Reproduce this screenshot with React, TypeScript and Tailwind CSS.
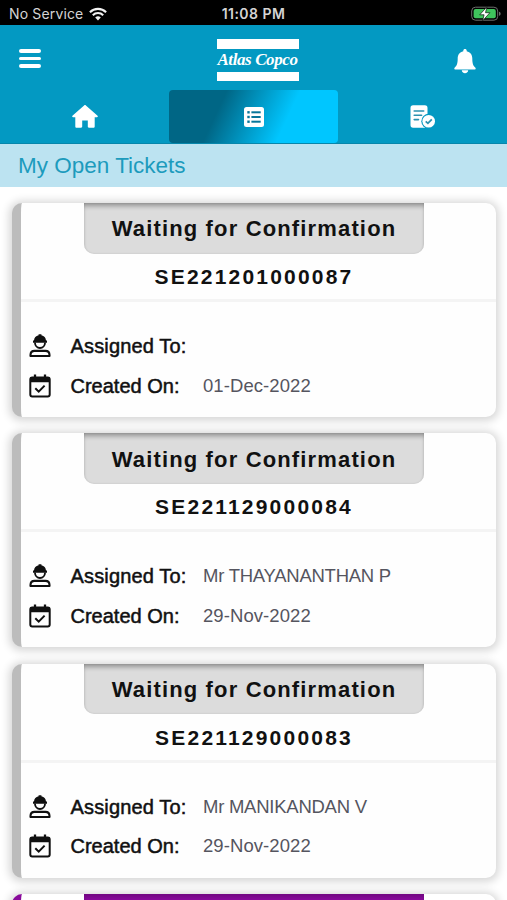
interface Ticket {
  id: string
  status: string
  assignedTo: string
  createdOn: string
}

const tickets: Ticket[] = [
  { id: "SE221201000087", status: "Waiting for Confirmation", assignedTo: "", createdOn: "01-Dec-2022" },
  { id: "SE221129000084", status: "Waiting for Confirmation", assignedTo: "Mr THAYANANTHAN P", createdOn: "29-Nov-2022" },
  { id: "SE221129000083", status: "Waiting for Confirmation", assignedTo: "Mr MANIKANDAN V", createdOn: "29-Nov-2022" },
]

function WifiIcon() {
  return (
    <svg width="18" height="14" viewBox="0 0 18 14" fill="none" stroke="#f2f2f2" strokeWidth="2.1">
      <path d="M0.9 5.2a11.6 11.6 0 0 1 16.2 0" />
      <path d="M3.8 8.2a7.4 7.4 0 0 1 10.4 0" />
      <path d="M6.2 10.5a4 4 0 0 1 5.6 0L9 13.6z" fill="#f2f2f2" stroke="none" />
    </svg>
  )
}

function BatteryIcon() {
  return (
    <svg width="30" height="16" viewBox="0 0 30 16">
      <rect x="0.7" y="1.2" width="26" height="13" rx="3.8" fill="none" stroke="#6d706d" strokeWidth="1" />
      <rect x="2.6" y="3.1" width="22.2" height="9.2" rx="2" fill="#3fc45c" />
      <path d="M28 5.8c1.2.4 1.6 1.1 1.6 2s-.4 1.6-1.6 2z" fill="#6d706d" />
      <path d="M16 0.8L8.7 8.8h4.4l-1.5 6 7.3-8.1h-4.4z" fill="#fff" stroke="#0a140c" strokeWidth="0.7" />
    </svg>
  )
}

function BellIcon() {
  return (
    <svg width="22" height="25" viewBox="0 0 22 25" fill="#fff">
      <path d="M11 0c-1 0-1.7.7-1.7 1.6v.6C5.6 3 3.7 5.9 3.7 9.5c0 5-.9 7.2-2.9 9-.9.8-.5 2 .6 2h19.2c1.1 0 1.5-1.2.6-2-2-1.8-2.9-4-2.9-9 0-3.6-1.9-6.5-5.600-7.300v-.6C12.7.7 12 0 11 0z" />
      <path d="M7.8 21.3h6.4c0 1.7-1.4 2.9-3.2 2.9s-3.200-1.200-3.200-2.900z" />
    </svg>
  )
}

function HomeIcon() {
  return (
    <svg width="26" height="23" viewBox="0 0 26 23" fill="#fff">
      <path d="M12.100.4c.5-.5 1.300-.5 1.800 0l11.400 10c.9.8.6 1.900-.5 1.900h-2.100v9.100c0 .8-.5 1.300-1.300 1.300h-4.500c-.7 0-1.100-.4-1.100-1.100v-6.100H10.200v6.100c0 .7-.4 1.100-1.100 1.100H4.600c-.8 0-1.300-.5-1.300-1.300v-9.100H1.200c-1.100 0-1.400-1.100-.5-1.900z" />
    </svg>
  )
}

function ListIcon() {
  return (
    <svg width="20" height="20" viewBox="0 0 20 20">
      <rect width="20" height="20" rx="2.5" fill="#fff" />
      <g fill="#08769a">
        <rect x="3.3" y="4.1" width="2.4" height="2.4" />
        <rect x="3.3" y="8.8" width="2.4" height="2.4" />
        <rect x="3.3" y="13.5" width="2.4" height="2.4" />
        <rect x="7.4" y="4.3" width="9.3" height="2" />
        <rect x="7.4" y="9" width="9.3" height="2" />
        <rect x="7.4" y="13.7" width="9.3" height="2" />
      </g>
    </svg>
  )
}

function ReportIcon() {
  return (
    <svg width="26" height="24" viewBox="0 0 26 24">
      <rect x="0.5" y="0.3" width="17" height="22.4" rx="2.6" fill="#fff" />
      <g stroke="#2b91b0" strokeWidth="1.6" strokeLinecap="round">
        <path d="M4.2 6h9.500M4.200 10.300h7.400M4.200 14.600h4.300" />
      </g>
      <circle cx="18.7" cy="16.2" r="7.4" fill="#0399c2" />
      <circle cx="18.7" cy="16.2" r="6.3" fill="#fff" />
      <path d="M15.7 16.3l2.200 2 3.900-4" fill="none" stroke="#2b91b0" strokeWidth="1.8" />
    </svg>
  )
}

function WorkerIcon() {
  return (
    <svg width="22" height="24" viewBox="0 0 22 24" fill="#101010">
      <path d="M9.600.2h2.800v1.100c2.800.6 4.400 2.600 4.600 5.100h1v2.300H4V6.400h1c.2-2.500 1.800-4.500 4.600-5.100z" />
      <path d="M5.900 8.500c.2 3.100 2.300 5.500 5.100 5.500s4.900-2.400 5.100-5.500" fill="none" stroke="#101010" strokeWidth="1.9" />
      <path d="M1.500 22v-1c0-2.600 1.600-4.100 4.100-4.100h10.800c2.500 0 4.100 1.500 4.100 4.100v1z" fill="none" stroke="#101010" strokeWidth="2.1" strokeLinejoin="round" />
    </svg>
  )
}

function CalendarIcon() {
  return (
    <svg width="22" height="24" viewBox="0 0 22 24" fill="none" stroke="#101010">
      <rect x="1.3" y="3.6" width="19.4" height="18.9" rx="2" strokeWidth="2" />
      <path d="M1 3.500h20v4.700H1z" fill="#101010" stroke="none" />
      <path d="M6 .4v4M16 .4v4" strokeWidth="2.3" />
      <path d="M6.300 14.300l3.400 3.300 5.900-6" strokeWidth="2" />
    </svg>
  )
}

function TicketCard({ ticket }: { ticket: Ticket }) {
  return (
    <div className="h-[214px] shrink-0 overflow-hidden rounded-[10px] border-l-[9px] border-[#bcbcbc] bg-[#fefefe] shadow-[0_1px_9px_3px_rgba(0,0,0,0.16)]">

      <div className="flex h-[99px] flex-col items-center border-b-[3px] border-[#f4f4f4] pr-[9px]">
        <div className="flex h-[50.500px] w-[340px] justify-center rounded-b-[10px] bg-[#dcdcdc] pt-[9.300px] shadow-[inset_0_5px_5px_-2px_rgba(0,0,0,0.33),inset_0_0_2px_rgba(0,0,0,0.15)]">
          <span className="text-[22px] leading-[34px] font-bold tracking-[1.150px] whitespace-nowrap">{ticket.status}</span>
        </div>
        <span className="mt-[8.500px] text-[21px] leading-[30px] font-bold tracking-[2.200px]">{ticket.id}</span>
      </div>

      <div className="flex flex-col gap-[9.500px] pt-[29.200px] pl-2 text-[20px] leading-[30px]">
        <div className="flex items-center">
          <WorkerIcon />
          <span className="ml-[19.500px] w-[132.500px] whitespace-nowrap tracking-[0.150px] [-webkit-text-stroke:0.5px_#111]">Assigned To:</span>
          <span className="text-[18.500px] tracking-[-0.250px] text-[#55555f]">{ticket.assignedTo}</span>
        </div>
        <div className="flex items-center">
          <CalendarIcon />
          <span className="ml-[19.500px] w-[132.500px] whitespace-nowrap [-webkit-text-stroke:0.5px_#111]">Created On:</span>
          <span className="text-[18.500px] tracking-[0.080px] text-[#55555f]">{ticket.createdOn}</span>
        </div>
      </div>

    </div>
  )
}

function App() {
  return (
    <div className="flex h-[900px] w-[507px] flex-col overflow-hidden bg-white font-['Liberation_Sans',sans-serif] text-[#111]">

      {/* STATUS BAR */}
      <div className="grid h-[25px] shrink-0 grid-cols-3 items-center bg-black pt-[3px] text-[#d4d4d4]">
        <div className="flex items-center gap-1.5 pl-[9px]">
          <span className="font-[Inter,sans-serif] text-[14px] leading-5 tracking-[0.150px]">No Service</span>
          <WifiIcon />
        </div>
        <span className="text-center font-[Inter,sans-serif] text-[14px] leading-5 font-semibold tracking-[0.450px]">11:08 PM</span>
        <div className="flex justify-end pr-[6px]">
          <BatteryIcon />
        </div>
      </div>

      {/* HEADER */}
      <header className="h-[119px] shrink-0 border-b border-[#0786ab] bg-[#0399c2]">
        <div className="flex h-[65px] justify-between pr-[31px] pl-[19px]">
          <div className="flex w-[22px] flex-col gap-1 pt-6">
            <span className="h-[3.500px] rounded-sm bg-white" />
            <span className="h-[3.500px] rounded-sm bg-white" />
            <span className="h-[3.500px] rounded-sm bg-white" />
          </div>
          <div className="mt-[14px] ml-5 flex h-[42px] w-[82px] flex-col justify-between">
            <span className="h-[9.500px] bg-white" />
            <span className="text-center font-['Liberation_Serif',serif] text-[17px] leading-[20px] font-bold tracking-[-0.400px] whitespace-nowrap text-white italic">Atlas Copco</span>
            <span className="h-[9.500px] bg-white" />
          </div>
          <div className="pt-6">
            <BellIcon />
          </div>
        </div>

        <nav className="grid h-[53px] grid-cols-3">
          <div className="flex items-center justify-center">
            <HomeIcon />
          </div>
          <div className="flex items-center justify-center rounded-[4px] bg-[linear-gradient(115deg,#006685_0%,#006685_30%,#00c6ff_68%,#00c6ff_100%)]">
            <ListIcon />
          </div>
          <div className="flex items-center justify-center">
            <ReportIcon />
          </div>
        </nav>
      </header>

      <div className="h-[43px] shrink-0 bg-[#bce3f1] pl-[18px]">
        <h1 className="text-[22.500px] leading-[44px] text-[#1c9bbd]">My Open Tickets</h1>
      </div>

      {/* TICKETS */}
      <main className="flex flex-col gap-[16.300px] pt-4 pr-[11px] pl-3">
        {tickets.map((ticket) => (
          <TicketCard key={ticket.id} ticket={ticket} />
        ))}
        <div className="flex h-[214px] shrink-0 justify-center overflow-hidden rounded-[10px] border-l-[9px] border-[#890b9b] bg-white pr-[9px] shadow-[0_1px_9px_3px_rgba(0,0,0,0.16)]">
          <div className="h-[50px] w-[340px] rounded-b-[10px] bg-[#8b0a9e] shadow-[inset_0_5px_5px_-2px_rgba(0,0,0,0.2)]" />
        </div>
      </main>

    </div>
  )
}

export default App
